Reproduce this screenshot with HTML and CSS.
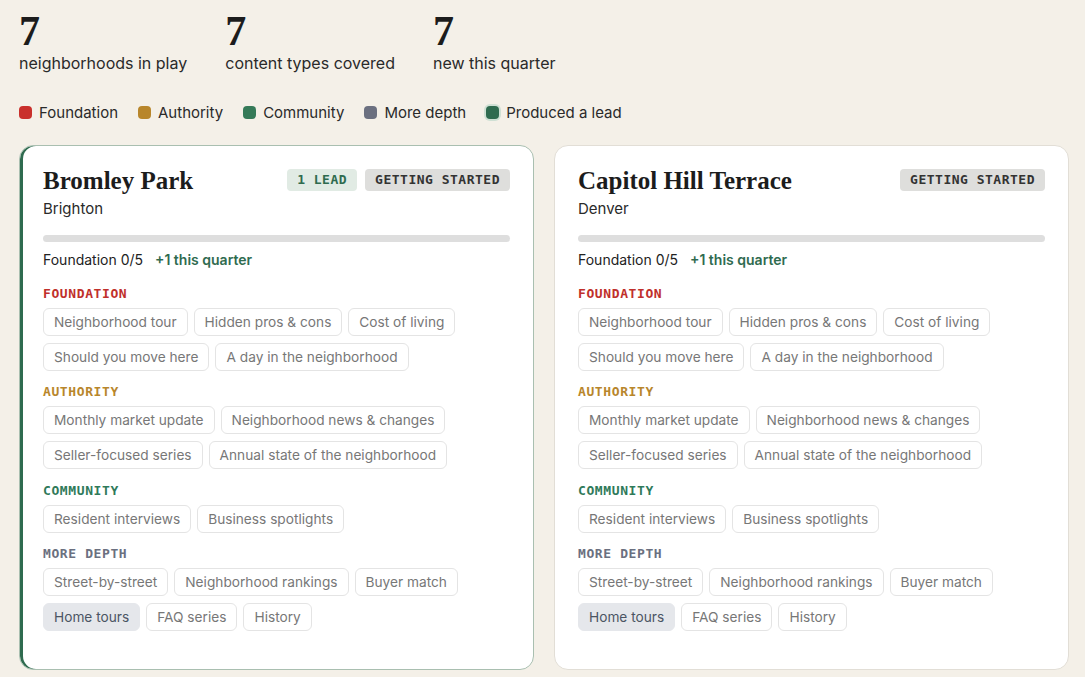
FILE: index.html
```html
<!DOCTYPE html>
<html lang="en">
<head>
    <meta charset="UTF-8">
    <meta name="viewport" content="width=device-width, initial-scale=1.0">
    <title>Neighborhood content coverage</title>
    <link rel="stylesheet" href="styles.css">
</head>
<body>

    <div class="page">
        <div class="stats">
            <div class="stat">
                <div class="stat-num">7</div>
                <div class="stat-label">neighborhoods in play</div>
            </div>
            <div class="stat">
                <div class="stat-num">7</div>
                <div class="stat-label">content types covered</div>
            </div>
            <div class="stat">
                <div class="stat-num">7</div>
                <div class="stat-label">new this quarter</div>
            </div>
        </div>

        <div class="legend">
            <span class="legend-item"><i class="dot dot-foundation"></i>Foundation</span>
            <span class="legend-item"><i class="dot dot-authority"></i>Authority</span>
            <span class="legend-item"><i class="dot dot-community"></i>Community</span>
            <span class="legend-item"><i class="dot dot-depth"></i>More depth</span>
            <span class="legend-item"><i class="dot dot-lead"></i>Produced a lead</span>
        </div>

        <div class="cards">
            <!-- Bromley Park -->
            <div class="card has-lead">
                <div class="card-head">
                    <div>
                        <h2>Bromley Park</h2>
                        <div class="city">Brighton</div>
                    </div>
                    <div class="badges">
                        <span class="badge badge-lead">1 lead</span>
                        <span class="badge">Getting started</span>
                    </div>
                </div>
                <div class="progress"></div>
                <div class="progress-info">Foundation 0/5 <span class="plus">+1 this quarter</span></div>

                <div class="group-label foundation">Foundation</div>
                <div class="chips">
                    <span class="chip">Neighborhood tour</span>
                    <span class="chip">Hidden pros &amp; cons</span>
                    <span class="chip">Cost of living</span>
                    <span class="chip">Should you move here</span>
                    <span class="chip">A day in the neighborhood</span>
                </div>

                <div class="group-label authority">Authority</div>
                <div class="chips">
                    <span class="chip">Monthly market update</span>
                    <span class="chip">Neighborhood news &amp; changes</span>
                    <span class="chip">Seller-focused series</span>
                    <span class="chip">Annual state of the neighborhood</span>
                </div>

                <div class="group-label community">Community</div>
                <div class="chips">
                    <span class="chip">Resident interviews</span>
                    <span class="chip">Business spotlights</span>
                </div>

                <div class="group-label depth">More depth</div>
                <div class="chips">
                    <span class="chip">Street-by-street</span>
                    <span class="chip">Neighborhood rankings</span>
                    <span class="chip">Buyer match</span>
                    <span class="chip done">Home tours</span>
                    <span class="chip">FAQ series</span>
                    <span class="chip">History</span>
                </div>
            </div>

            <!-- Capitol Hill Terrace -->
            <div class="card">
                <div class="card-head">
                    <div>
                        <h2>Capitol Hill Terrace</h2>
                        <div class="city">Denver</div>
                    </div>
                    <div class="badges">
                        <span class="badge">Getting started</span>
                    </div>
                </div>
                <div class="progress"></div>
                <div class="progress-info">Foundation 0/5 <span class="plus">+1 this quarter</span></div>

                <div class="group-label foundation">Foundation</div>
                <div class="chips">
                    <span class="chip">Neighborhood tour</span>
                    <span class="chip">Hidden pros &amp; cons</span>
                    <span class="chip">Cost of living</span>
                    <span class="chip">Should you move here</span>
                    <span class="chip">A day in the neighborhood</span>
                </div>

                <div class="group-label authority">Authority</div>
                <div class="chips">
                    <span class="chip">Monthly market update</span>
                    <span class="chip">Neighborhood news &amp; changes</span>
                    <span class="chip">Seller-focused series</span>
                    <span class="chip">Annual state of the neighborhood</span>
                </div>

                <div class="group-label community">Community</div>
                <div class="chips">
                    <span class="chip">Resident interviews</span>
                    <span class="chip">Business spotlights</span>
                </div>

                <div class="group-label depth">More depth</div>
                <div class="chips">
                    <span class="chip">Street-by-street</span>
                    <span class="chip">Neighborhood rankings</span>
                    <span class="chip">Buyer match</span>
                    <span class="chip done">Home tours</span>
                    <span class="chip">FAQ series</span>
                    <span class="chip">History</span>
                </div>
            </div>
        </div>
    </div>

</body>
</html>
```

FILE: styles.css
```css
body {
    margin: 0;
    background: #f4f0e8;
    font-family: 'Inter', 'Noto Sans', sans-serif;
    color: #222;
}

.page {
    width: 1050px;
    padding: 9px 0 0 19px;
}

/* Stats row */
.stats {
    display: flex;
    gap: 38px;
}

.stat-num {
    font-family: 'Liberation Serif', serif;
    font-weight: bold;
    font-size: 42px;
    line-height: 44px;
    color: #1c1c1c;
}

.stat-label {
    font-size: 16px;
    line-height: 20px;
    color: #2a2a2a;
}

/* Legend */
.legend {
    display: flex;
    gap: 20px;
    margin-top: 30px;
    font-size: 15px;
    color: #2a2a2a;
}

.legend-item {
    display: flex;
    align-items: center;
    gap: 7px;
}

.dot {
    width: 13px;
    height: 13px;
    border-radius: 4px;
    display: inline-block;
}

.dot-foundation { background: #c9302c; }
.dot-authority { background: #b8862b; }
.dot-community { background: #357a58; }
.dot-depth { background: #6b7080; }
.dot-lead {
    background: #2f6b4f;
    box-shadow: 0 0 0 2px #cfe0d4;
}

/* Cards */
.cards {
    display: grid;
    grid-template-columns: 1fr 1fr;
    gap: 20px;
    margin-top: 23px;
}

.card {
    background: #fff;
    border: 1px solid #e2ded6;
    border-radius: 14px;
    padding: 21px 23px 38px;
}

.card.has-lead {
    border-color: #a9bfb0;
    box-shadow: inset 3px 0 0 #2f6b4f;
}

.card-head {
    display: flex;
    justify-content: space-between;
    align-items: flex-start;
}

h2 {
    font-family: 'Liberation Serif', serif;
    font-weight: bold;
    font-size: 25px;
    line-height: 28px;
    margin: 0;
    color: #1c1c1c;
}

.city {
    font-size: 15px;
    line-height: 20px;
    margin-top: 4px;
    color: #2a2a2a;
}

.badges {
    display: flex;
    gap: 8px;
    margin-top: 2px;
}

.badge {
    font-family: 'DejaVu Sans Mono', monospace;
    font-weight: bold;
    font-size: 13px;
    letter-spacing: 0.5px;
    text-transform: uppercase;
    background: #dededc;
    color: #333;
    border-radius: 4px;
    padding: 3px 10px;
    line-height: 16px;
}

.badge-lead {
    background: #e1ebe4;
    color: #2f6b4f;
}

.progress {
    height: 7px;
    background: #dedede;
    border-radius: 4px;
    margin-top: 16px;
}

.progress-info {
    font-size: 14px;
    line-height: 18px;
    margin-top: 9px;
    padding-bottom: 3px;
    color: #222;
}

.plus {
    color: #2f6b4f;
    font-weight: 600;
    margin-left: 8px;
}

/* Content groups */
.group-label {
    font-family: 'DejaVu Sans Mono', monospace;
    font-weight: bold;
    font-size: 13px;
    letter-spacing: 0.6px;
    text-transform: uppercase;
    line-height: 16px;
    margin-top: 13.5px;
}

.group-label.foundation { color: #c0302b; }
.group-label.authority { color: #b8862b; }
.group-label.community { color: #2f7a5a; }
.group-label.depth { color: #6b7080; }

.chips {
    display: flex;
    flex-wrap: wrap;
    gap: 7px 6px;
    margin-top: 6px;
}

.chip {
    font-size: 13.7px;
    line-height: 26px;
    padding: 0 10px;
    border: 1px solid #e4e4e4;
    border-radius: 6px;
    color: #777;
}

.chip.done {
    background: #e5e7eb;
    border-color: #e5e7eb;
    color: #4b5563;
}
```
